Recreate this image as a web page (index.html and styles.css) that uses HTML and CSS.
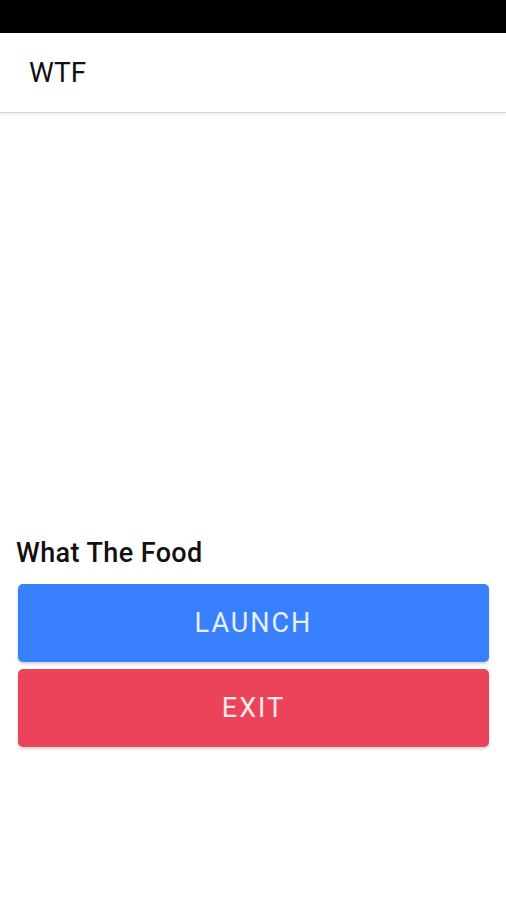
FILE: index.html
```html
<!DOCTYPE html>
<html lang="en">
<head>
  <meta charset="UTF-8" />
  <meta name="viewport" content="width=device-width, initial-scale=1.0"/>
  <title>WTF</title>
  <link rel="stylesheet" href="styles.css">
</head>
<body>
  <div class="statusbar"></div>
  <header class="toolbar">
    <h1>WTF</h1>
  </header>

  <main class="content">
    <h2>What The Food</h2>
    <button class="btn btn-primary">Launch</button>
    <button class="btn btn-danger">Exit</button>
  </main>
</body>
</html>
```

FILE: styles.css
```css
body {
  margin: 0;
  background-color: #fff;
  color: #000;
  font-family: Roboto, "Noto Sans", sans-serif;
  height: 900px;
  display: flex;
  flex-direction: column;
}

.statusbar {
  height: 33px;
  background-color: #000;
}

.toolbar {
  height: 79px;
  display: flex;
  align-items: center;
  padding: 0 29px;
  border-bottom: 1px solid #d6d6d6;
  box-shadow: 0 2px 3px rgba(0, 0, 0, 0.08);
}

.toolbar h1 {
  margin: 0;
  font-size: 28px;
  font-weight: 400;
  color: #111;
}

.content {
  display: flex;
  flex-direction: column;
  padding: 426px 16px 0 16px;
}

.content h2 {
  margin: 0 0 17px 0;
  font-size: 27px;
  font-weight: 500;
  line-height: 28px;
  letter-spacing: 0.4px;
  color: #111;
}

.btn {
  margin: 0 1px 7px 2px;
  height: 78px;
  border: none;
  border-radius: 5px;
  color: #e8efff;
  font-family: Roboto, sans-serif;
  font-size: 27px;
  font-weight: 400;
  letter-spacing: 2px;
  text-transform: uppercase;
  box-shadow: 0 2px 3px rgba(0, 0, 0, 0.18);
}

.btn-primary {
  background-color: #3880ff;
}

.btn-danger {
  background-color: #eb445a;
  color: #fde9ec;
}
```
